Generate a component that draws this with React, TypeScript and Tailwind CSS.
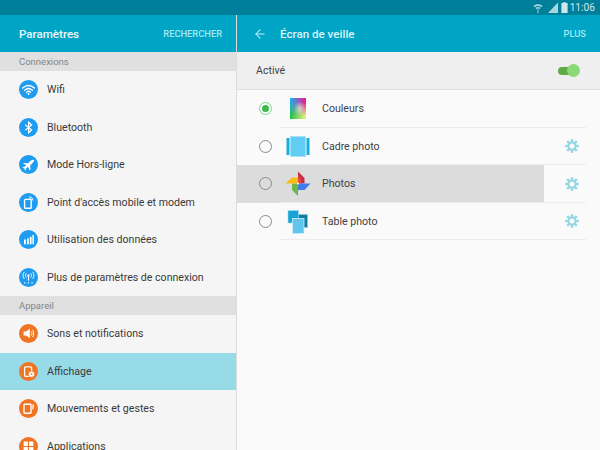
import React from "react";
import { ArrowLeft } from "lucide-react";

const Wifi = () => (
  <svg viewBox="0 0 19 19" className="w-[19px] h-[19px]" fill="none" stroke="#fff" strokeLinecap="round">
    <path d="M3.6 8 Q9.5 3 15.4 8" strokeWidth="1.5" />
    <path d="M5.6 10.2 Q9.5 6.8 13.4 10.2" strokeWidth="1.4" />
    <path d="M7.5 12.2 Q9.5 10.4 11.5 12.2" strokeWidth="1.3" />
    <circle cx="9.5" cy="14" r="1" fill="#fff" stroke="none" />
  </svg>
);
const Bt = () => (
  <svg viewBox="0 0 19 19" className="w-[19px] h-[19px]" fill="none" stroke="#fff" strokeWidth="1.2">
    <path d="M6.3 6.8 12.6 12 9.6 14.8V4.2l3 2.8L6.3 12.2" />
  </svg>
);
const Plane = () => (
  <svg viewBox="0 0 19 19" className="w-[19px] h-[19px]" fill="#fff">
    <path d="M4 8.6 5 7.9 9 8.2 12 5.6C13 4.8 14.6 4.4 15 4.8 15.4 5.2 14.9 6.6 14 7.6L11.2 10.4 11.6 14.6 10.7 15.3 8.9 11.8 6.9 13.7 7 15.1 6.2 15.6 5.3 13.6 3.4 12.6 3.9 11.9 5.3 12 7.2 10 Z" />
  </svg>
);
const Hotspot = () => (
  <svg viewBox="0 0 19 19" className="w-[19px] h-[19px]" fill="none">
    <rect x="5.6" y="6.4" width="6.6" height="8.8" rx="0.8" stroke="#fff" strokeWidth="1.4" />
    <path d="M10.2 3.8C12.4 3.8 14 5.4 14 7.6" stroke="#fff" strokeWidth="1" />
    <path d="M10.2 5.4C11.4 5.4 12.4 6.4 12.4 7.6" stroke="#fff" strokeWidth="0.9" />
  </svg>
);
const Usage = () => (
  <svg viewBox="0 0 19 19" className="w-[19px] h-[19px]" fill="#fff">
    <rect x="5" y="9.5" width="1.8" height="4.8" />
    <rect x="8" y="8.4" width="1.8" height="5.9" />
    <rect x="10.8" y="6.8" width="1.8" height="7.5" />
    <rect x="13.4" y="5" width="1.5" height="9.3" />
  </svg>
);
const More = () => (
  <svg viewBox="0 0 19 19" className="w-[19px] h-[19px]" fill="none" stroke="#fff" strokeWidth="0.9">
    <circle cx="9.5" cy="7.4" r="1.1" fill="#fff" stroke="none" />
    <path d="M9.5 8V12.6" strokeWidth="1.2" />
    <path d="M7.3 5.2C6.2 6.4 6.2 8.4 7.3 9.6M11.7 5.2C12.8 6.4 12.8 8.4 11.7 9.6" />
    <path d="M5.4 3.8C3.6 5.8 3.6 9 5.4 11M13.6 3.8C15.4 5.8 15.4 9 13.6 11" />
    <path d="M5.3 14.8h1.2M8.9 14.8h1.2M12.5 14.8h1.2" strokeWidth="1.2" />
  </svg>
);
const Sound = () => (
  <svg viewBox="0 0 19 19" className="w-[19px] h-[19px]" fill="#fff">
    <path d="M4.6 7.6H7L10.8 4.8V14.2L7 11.4H4.6Z" />
    <path d="M12.2 7.4C13.1 8.6 13.1 10.4 12.2 11.6" fill="none" stroke="#fff" strokeWidth="1" />
    <path d="M13.6 6C15 7.9 15 11.1 13.6 13" fill="none" stroke="#fff" strokeWidth="1" />
  </svg>
);
const Display = () => (
  <svg viewBox="0 0 19 19" className="w-[19px] h-[19px]">
    <rect x="5.6" y="4.8" width="7" height="9.6" rx="0.9" fill="none" stroke="#fff" strokeWidth="1.3" />
    <circle cx="12.6" cy="12.2" r="3.1" fill="#fff" stroke="#ef7423" strokeWidth="0.7" />
    <circle cx="12.6" cy="12.2" r="0.9" fill="#ef7423" />
  </svg>
);
const Motion = () => (
  <svg viewBox="0 0 19 19" className="w-[19px] h-[19px]" fill="none">
    <rect x="5" y="5.2" width="7" height="9" rx="0.6" stroke="#fff" strokeWidth="1.4" />
    <path d="M13.4 5.4H15L14.4 10.6H13.4Z" fill="#fff" />
  </svg>
);
const Apps = () => (
  <svg viewBox="0 0 19 19" className="w-[19px] h-[19px]" fill="#fff">
    <rect x="4.6" y="4.6" width="4.4" height="4.4" rx="0.4" />
    <rect x="10" y="4.6" width="4.4" height="4.4" rx="0.4" />
    <rect x="4.6" y="10" width="4.4" height="4.4" rx="0.4" />
    <rect x="10" y="10" width="4.4" height="4.4" rx="0.4" />
  </svg>
);

const Gear = () => (
  <svg viewBox="0 0 16 16" className="w-[14px] h-[14px]">
    <g fill="#93d6e5">
      {[0, 45, 90, 135].map((a) => (
        <rect key={a} x="6.6" y="0.2" width="2.8" height="15.6" transform={`rotate(${a} 8 8)`} />
      ))}
    </g>
    <circle cx="8" cy="8" r="5.2" fill="#93d6e5" />
    <circle cx="8" cy="8" r="2.9" fill="#fafafa" />
  </svg>
);

const Couleurs = () => (
  <svg viewBox="0 0 16 21" className="w-[16px] h-[21px]">
    <defs>
      <linearGradient id="cA" x1="0" y1="0" x2="1" y2="0">
        <stop offset="0" stopColor="#14b2f0" />
        <stop offset="1" stopColor="#f8148e" />
      </linearGradient>
      <linearGradient id="cB" x1="0" y1="1" x2="1" y2="1">
        <stop offset="0" stopColor="#1cc048" />
        <stop offset="1" stopColor="#eef27a" />
      </linearGradient>
      <linearGradient id="cM" x1="0" y1="0" x2="0" y2="1">
        <stop offset="0.2" stopColor="#fff" stopOpacity="0" />
        <stop offset="0.85" stopColor="#fff" />
      </linearGradient>
      <radialGradient id="cW" cx="0.6" cy="0.5" r="0.35">
        <stop offset="0" stopColor="#fff" stopOpacity="0.55" />
        <stop offset="1" stopColor="#fff" stopOpacity="0" />
      </radialGradient>
      <mask id="cMask">
        <rect width="16" height="21" fill="url(#cM)" />
      </mask>
    </defs>
    <rect width="16" height="21" fill="url(#cA)" />
    <rect width="16" height="21" fill="url(#cB)" mask="url(#cMask)" />
    <rect width="16" height="21" fill="url(#cW)" />
  </svg>
);
const Cadre = () => (
  <svg viewBox="0 0 24 21" className="w-[24px] h-[21px]">
    <rect x="0.5" y="2" width="3" height="17" fill="#14aee0" />
    <rect x="20.5" y="2" width="3" height="17" fill="#14aee0" />
    <rect x="4.5" y="0.5" width="15" height="20" fill="#62cdf2" stroke="#a5e0f4" strokeWidth="0.8" />
  </svg>
);
const Pinwheel = () => (
  <svg viewBox="0 0 26 27" className="w-[26px] h-[27px]">
    <path d="M13 13.5V1.5L19.5 8V13.5Z" fill="#c8304a" />
    <path d="M13 13.5V6L16 9V13.5Z" fill="#e0493f" />
    <path d="M13 13.5H25.5L19.5 20H13Z" fill="#3f7de8" />
    <path d="M13 13.5V26L7 20V13.5Z" fill="#6fb64a" />
    <path d="M13 13.5H0.5L7 7.5H13Z" fill="#f9bc15" />
    <circle cx="13" cy="13.5" r="1" fill="#fff" />
  </svg>
);
const Table = () => (
  <svg viewBox="0 0 22 24" className="w-[22px] h-[24px] mt-[1px]">
    <rect x="1" y="0.5" width="10.5" height="12.5" fill="#18a4d6" stroke="#a5dcf0" strokeWidth="0.6" />
    <rect x="11.5" y="4.5" width="9" height="13" fill="#0d7ea6" stroke="#8ccbe0" strokeWidth="0.6" />
    <rect x="5.5" y="8.5" width="11.5" height="15" fill="#62c6ec" stroke="#d0eef9" strokeWidth="0.8" />
  </svg>
);

const conn = [
  ["Wifi", <Wifi />],
  ["Bluetooth", <Bt />],
  ["Mode Hors-ligne", <Plane />],
  ["Point d'accès mobile et modem", <Hotspot />],
  ["Utilisation des données", <Usage />],
  ["Plus de paramètres de connexion", <More />],
] as const;
const dev = [
  ["Sons et notifications", <Sound />, false],
  ["Affichage", <Display />, true],
  ["Mouvements et gestes", <Motion />, false],
  ["Applications", <Apps />, false],
] as const;

function Item({ label, icon, color, active }: { label: string; icon: React.ReactNode; color: "blue" | "orange"; active?: boolean }) {
  return (
    <div className={`h-[37.5px] shrink-0 flex items-center pl-[19px] ${active ? "bg-[#98dbe8]" : ""}`}>
      <div className={`w-[19px] h-[19px] rounded-full flex items-center justify-center ${color === "blue" ? "bg-[#1f9cf0]" : "bg-[#ef7423]"}`}>
        {icon}
      </div>
      <span className="ml-[9px] pt-[2px] text-[10.6px] leading-none text-[#3a3a3a]">{label}</span>
    </div>
  );
}

function Section({ label }: { label: string }) {
  return (
    <div className="h-[19px] shrink-0 bg-[#e0e0e0] flex items-center pl-[19px] pt-[1px] text-[9.5px] leading-none text-[#858585]">
      {label}
    </div>
  );
}

function Row({ label, icon, selected, gear, pressed }: { label: string; icon: React.ReactNode; selected?: boolean; gear?: boolean; pressed?: boolean }) {
  return (
    <div className="h-[37.5px] shrink-0 flex items-stretch pr-[14px] relative">
      <div className={`flex items-center grow ${pressed ? "bg-[#dcdcdc] mr-[42px]" : ""}`}>
        <div className="w-[43px] shrink-0 flex justify-start pl-[21.5px]">
          {selected ? (
            <div className="w-[13px] h-[13px] rounded-full border border-[#7fd585] flex items-center justify-center">
              <div className="w-[7px] h-[7px] rounded-full bg-[#3dba4e]" />
            </div>
          ) : (
            <div className="w-[13px] h-[13px] rounded-full border border-[#8a8a8a]" />
          )}
        </div>
        <div className="w-[42px] shrink-0 flex justify-start">
          <div className="w-[36px] flex justify-center">{icon}</div>
        </div>
        <span className="pt-[2px] text-[10.6px] leading-none text-[#3f3f3f]">{label}</span>
      </div>
      {gear && (
        <div className="absolute right-[21px] top-0 bottom-0 flex items-center">
          <Gear />
        </div>
      )}
      <div className="absolute left-[43px] right-[14px] bottom-0 h-px bg-[#ececec]" />
    </div>
  );
}

export default function App() {
  return (
    <div
      className="w-[600px] h-[450px] overflow-hidden flex flex-col bg-[#fafafa]"
      style={{ fontFamily: "Roboto, sans-serif" }}
    >
      <div className="h-[15px] shrink-0 bg-[#007f9a] flex items-center justify-end pr-[5px] gap-[2px]">
        <svg viewBox="0 0 11 11" className="w-[10px] h-[10px] mr-[3px]" fill="#a9d6e0">
          <path d="M0.5 3.6C3.2 0.8 7.8 0.8 10.5 3.6L9.4 4.8C7.2 2.7 3.8 2.7 1.6 4.8Z" />
          <path d="M2.6 5.6C4.2 4 6.8 4 8.4 5.6L7.3 6.7C6.3 5.8 4.7 5.8 3.7 6.7Z" />
          <path d="M4.4 7.5C5.1 6.9 5.9 6.9 6.6 7.5L5.5 8.7Z" />
          <rect x="4.9" y="9" width="1.2" height="2" />
        </svg>
        <svg viewBox="0 0 11 11" className="w-[11px] h-[11px]" fill="#a9d6e0">
          <path d="M0 11 10 0.5V11Z" />
        </svg>
        <svg viewBox="0 0 7 11" className="w-[7px] h-[11px]" fill="#cfe7ec">
          <path d="M2 0.2H5V1H6.6V11H0.4V1H2Z" />
        </svg>
        <span className="pt-[1px] text-[10.2px] leading-none text-[#cfe7ec]">11:06</span>
      </div>
      <div className="flex grow min-h-0">
        <div className="w-[237px] shrink-0 flex flex-col border-r border-[#dcdcdc] bg-[#f5f5f5]">
          <div className="h-[37px] shrink-0 bg-[#00a5c5] flex items-center justify-between pl-[19px] pr-[14px]">
            <span className="pt-[2px] text-[11.6px] leading-none font-medium text-[#eaf8fb]">Paramètres</span>
            <span className="pt-[1px] text-[9.3px] leading-none font-medium text-[#a5e8f2]">RECHERCHER</span>
          </div>
          <Section label="Connexions" />
          {conn.map(([l, i]) => (
            <Item key={l} label={l} icon={i} color="blue" />
          ))}
          <Section label="Appareil" />
          {dev.map(([l, i, a]) => (
            <Item key={l} label={l} icon={i} color="orange" active={a} />
          ))}
        </div>
        <div className="grow flex flex-col">
          <div className="h-[37px] shrink-0 bg-[#00a5c5] flex items-center pl-[16px] pr-[14px]">
            <ArrowLeft size={14} strokeWidth={1.8} color="#c4f0f7" />
            <span className="ml-[13px] pt-[2px] text-[11.6px] leading-none font-medium text-[#d8f4f8]">Écran de veille</span>
            <span className="ml-auto pt-[1px] text-[9.3px] leading-none font-medium text-[#a5e8f2]">PLUS</span>
          </div>
          <div className="h-[38px] shrink-0 bg-[#efefef] border-b border-[#e0e0e0] flex items-center pl-[19px] pr-[20px]">
            <span className="pt-[2px] text-[10.6px] leading-none text-[#3f3f3f]">Activé</span>
            <div className="ml-auto relative w-[21px] mr-[1px] h-[8px] rounded-full bg-[#5eab48]">
              <div className="absolute right-[-1px] top-[-2.5px] w-[13px] h-[13px] rounded-full bg-[#8ad974]" />
            </div>
          </div>
          <Row label="Couleurs" icon={<Couleurs />} selected />
          <Row label="Cadre photo" icon={<Cadre />} gear />
          <Row label="Photos" icon={<Pinwheel />} gear pressed />
          <Row label="Table photo" icon={<Table />} gear />
        </div>
      </div>
    </div>
  );
}
